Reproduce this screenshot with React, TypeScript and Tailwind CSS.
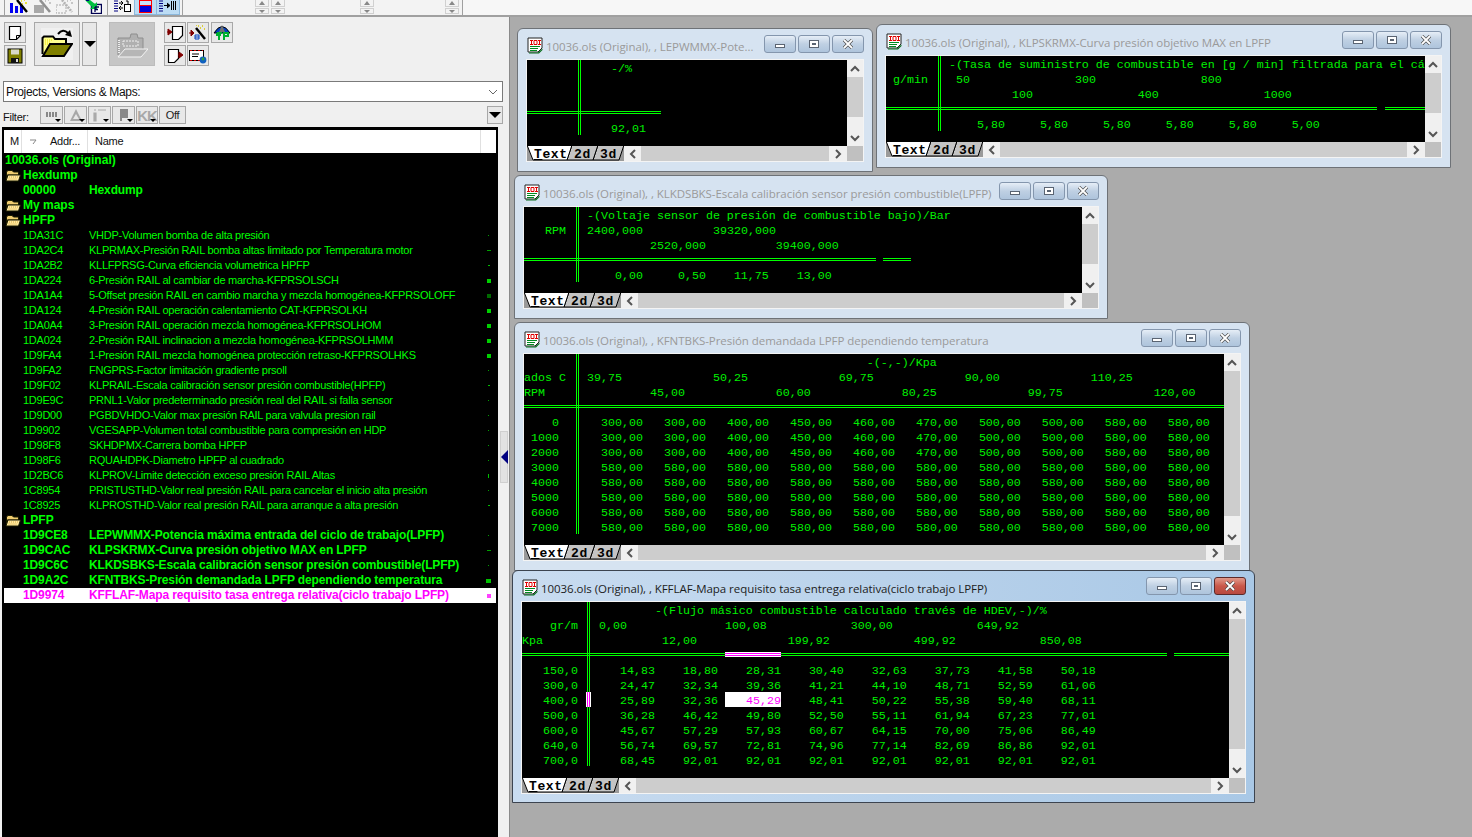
import React from "react";

type Seg = [number, string];
const pad = (n: number) => " ".repeat(Math.max(0, n));

function Line({ segs }: { segs: Seg[] }) {
  let cur = 0;
  const out: React.ReactNode[] = [];
  segs.forEach(([col, text], i) => {
    out.push(<span key={"p" + i}>{pad(col - cur)}</span>);
    out.push(<span key={i}>{text}</span>);
    cur = col + text.length;
  });
  return <div className="h-[15px] leading-[15px] whitespace-pre">{out.length ? out : " "}</div>;
}

function Chevron({ dir }: { dir: "up" | "down" | "left" | "right" }) {
  const p = {
    up: "M2 8 L6 4 L10 8",
    down: "M2 4 L6 8 L10 4",
    left: "M8 2 L4 6 L8 10",
    right: "M4 2 L8 6 L4 10",
  }[dir];
  return (
    <svg width="12" height="12" viewBox="0 0 12 12" fill="none">
      <path d={p} stroke="#555" strokeWidth="2" />
    </svg>
  );
}

function Tabs() {
  return (
    <div className="relative w-[97px] h-[15px] shrink-0 bg-[#9a9a9a] overflow-hidden font-['Liberation_Mono',monospace] text-[13px] font-bold tracking-[0.6px] leading-[18px] text-black">
      <svg width="97" height="15" viewBox="0 0 97 15" className="absolute inset-0">
        <path d="M71 -1 H97 L92 14 H66 Z" fill="#c4c4c4" stroke="#000" />
        <path d="M45 -1 H71 L66 14 H40 Z" fill="#c4c4c4" stroke="#000" />
        <path d="M0 -1 H45 L40 14 H6 Z" fill="#fff" stroke="#000" />
      </svg>
      <span className="absolute left-[7px] top-0">
        <span className="underline">T</span>ext
      </span>
      <span className="absolute left-[47px] top-0">2d</span>
      <span className="absolute left-[73px] top-0">3d</span>
    </div>
  );
}

function DocIcon() {
  return (
    <svg width="14" height="16" viewBox="0 0 14 16">
      <path d="M1.5 1.5 H12.5 V10.5 L8.5 14.5 H1.5 Z" fill="#ffffff" stroke="#000" strokeWidth="1.2" />
      <path d="M12.5 10.5 L8.5 10.5 V14.5" fill="none" stroke="#000" />
    </svg>
  );
}

function TitleIcon() {
  return (
    <svg width="16" height="17" viewBox="0 0 16 17" className="shrink-0">
      <path d="M1 1 H15 V11 L11 15 H1 Z" fill="#fff" stroke="#222" />
      <path d="M3 3.5 H6 M4.5 3.5 V7.5 M3 7.5 H6 M7 3.5 H10 V7.5 H7 Z M11 3.5 H14 M12.5 3.5 V7.5 M11 7.5 H14" stroke="#e00000" fill="none" />
      <path d="M3 9.5 H13 M3 11.5 H11 M3 13.5 H10" stroke="#008a20" />
      <path d="M2 15.5 H11 L15.5 11.5 V13 L12 16.5 H2Z" fill="#0a6e1e" />
    </svg>
  );
}

function WinBtn({ kind, active }: { kind: "min" | "max" | "close"; active?: boolean }) {
  const red = active && kind === "close";
  return (
    <div
      className={
        red
          ? "w-[32px] h-[18px] rounded-[3px] border border-[#5c2a2a] bg-gradient-to-b from-[#e09a8c] via-[#c9584a] to-[#b8493f] flex items-center justify-center"
          : "w-[32px] h-[18px] rounded-[3px] border border-[#8496ad] bg-gradient-to-b from-[#e6eef7] via-[#bfd0e3] to-[#aec4dc] flex items-center justify-center"
      }
    >
      {kind === "min" && <div className="w-[10px] h-[4px] mt-[4px] bg-white border border-[#5a6472]" />}
      {kind === "max" && (
        <div className="w-[10px] h-[8px] bg-white border border-[#5a6472] flex items-center justify-center">
          <div className="w-[4px] h-[2px] bg-[#5a6472]" />
        </div>
      )}
      {kind === "close" && (
        <svg width="12" height="10" viewBox="0 0 12 10">
          <path d="M2 1 L10 9 M10 1 L2 9" stroke="#4a4a4a" strokeWidth="3.2" />
          <path d="M2 1 L10 9 M10 1 L2 9" stroke="#fff" strokeWidth="1.8" />
        </svg>
      )}
    </div>
  );
}

function Win({
  className,
  title,
  active,
  lines,
  children,
}: {
  className: string;
  title: string;
  active?: boolean;
  lines: Seg[][];
  children?: React.ReactNode;
}) {
  return (
    <div
      className={
        "absolute rounded-t-[6px] border flex flex-col pl-[8px] pr-[8px] " +
        (active
          ? "border-[#3c4450] bg-gradient-to-r from-[#c9dcf0] to-[#a9c8e6] "
          : "border-[#6e7277] bg-[#d6e3f1] ") +
        className
      }
    >
      <div className="h-[30px] shrink-0 flex items-center pl-[1px] pt-[2px]">
        <TitleIcon />
        <div
          className={
            "ml-[3px] mt-[3px] flex-1 min-w-0 truncate text-[11.5px] font-['Open_Sans',sans-serif] tracking-[-0.05px] " +
            (active ? "text-[#1c1c1c]" : "text-[#9a9a9a]")
          }
        >
          {title}
        </div>
        <div className="flex gap-[2px] shrink-0 mb-[2px]">
          <WinBtn kind="min" />
          <WinBtn kind="max" />
          <WinBtn kind="close" active={active} />
        </div>
      </div>
      <div className="flex-1 min-h-0 flex flex-col border border-[#f4f4f4] bg-[#f0f0f0]">
        <div className="flex-1 min-h-0 flex">
          <div className="relative flex-1 min-w-0 bg-black overflow-hidden pt-[2px] text-[11.67px] tracking-normal text-[#00f000] font-['Liberation_Mono',monospace]">
            {lines.map((l, i) => (
              <Line key={i} segs={l} />
            ))}
            {children}
          </div>
          <div className="w-[16px] shrink-0 flex flex-col bg-[#f0f0f0]">
            <div className="h-[17px] flex items-center justify-center"><Chevron dir="up" /></div>
            <div className="flex-1 min-h-0 flex flex-col">
              <div className="flex-[3] bg-[#cdcdcd]" />
              <div className="h-[12px]" />
            </div>
            <div className="h-[17px] flex items-center justify-center"><Chevron dir="down" /></div>
          </div>
        </div>
        <div className="h-[15px] shrink-0 flex">
          <Tabs />
          <div className="flex-1 min-w-0 flex bg-[#f0f0f0]">
            <div className="w-[17px] flex items-center justify-center"><Chevron dir="left" /></div>
            <div className="flex-1 bg-[#cdcdcd]" />
            <div className="w-[18px] flex items-center justify-center"><Chevron dir="right" /></div>
          </div>
          <div className="w-[16px] bg-[#c0c0c0]" />
        </div>
      </div>
    </div>
  );
}

function DoubleH({ className }: { className: string }) {
  return <div className={"absolute h-[3px] border-y border-[#00ff00] " + className} />;
}
function DoubleV({ className }: { className: string }) {
  return <div className={"absolute w-[3px] border-x border-[#00ff00] " + className} />;
}

const w4low = ["300,00", "300,00", "400,00", "450,00", "460,00", "470,00", "500,00", "500,00", "580,00", "580,00"];
const w4hi = Array(10).fill("580,00") as string[];
const w4rows: [string, string[]][] = [
  ["   0", w4low],
  ["1000", w4low],
  ["2000", w4low],
  ["3000", w4hi],
  ["4000", w4hi],
  ["5000", w4hi],
  ["6000", w4hi],
  ["7000", w4hi],
];
const w4lines: Seg[][] = [
  [[49, "-(-,-)/Kpa"]],
  [[0, "ados C"], [9, "39,75"], [27, "50,25"], [45, "69,75"], [63, "90,00"], [81, "110,25"]],
  [[0, "RPM"], [18, "45,00"], [36, "60,00"], [54, "80,25"], [72, "99,75"], [90, "120,00"]],
  [],
  ...w4rows.map(([k, vals]) => [[1, k] as Seg, ...vals.map((v, i) => [11 + i * 9, v] as Seg)]),
];

const w5rows: [string, string[]][] = [
  ["150,0", ["14,83", "18,80", "28,31", "30,40", "32,63", "37,73", "41,58", "50,18"]],
  ["300,0", ["24,47", "32,34", "39,36", "41,21", "44,10", "48,71", "52,59", "61,06"]],
  ["400,0", ["25,89", "32,36", "", "48,41", "50,22", "55,38", "59,40", "68,11"]],
  ["500,0", ["36,28", "46,42", "49,80", "52,50", "55,11", "61,94", "67,23", "77,01"]],
  ["600,0", ["45,67", "57,29", "57,93", "60,67", "64,15", "70,00", "75,06", "86,49"]],
  ["640,0", ["56,74", "69,57", "72,81", "74,96", "77,14", "82,69", "86,86", "92,01"]],
  ["700,0", ["68,45", "92,01", "92,01", "92,01", "92,01", "92,01", "92,01", "92,01"]],
];
const w5lines: Seg[][] = [
  [[19, "-(Flujo másico combustible calculado través de HDEV,-)/%"]],
  [[4, "gr/m"], [11, "0,00"], [29, "100,08"], [47, "300,00"], [65, "649,92"]],
  [[0, "Kpa"], [20, "12,00"], [38, "199,92"], [56, "499,92"], [74, "850,08"]],
  [],
  ...w5rows.map(([k, vals]) => [[3, k] as Seg, ...vals.map((v, i) => [14 + i * 9, v] as Seg)]),
];

type Mark = "dot" | "dash" | "tick" | "sq" | "sqd" | "wide" | "vbar" | "mag" | "";
type Row =
  | { t: "title"; name: string }
  | { t: "folder"; name: string }
  | { t: "item"; addr: string; name: string; bold?: boolean; sel?: boolean; mark?: Mark };

const rows: Row[] = [
  { t: "title", name: "10036.ols (Original)" },
  { t: "folder", name: "Hexdump" },
  { t: "item", addr: "00000", name: "Hexdump", bold: true },
  { t: "folder", name: "My maps" },
  { t: "folder", name: "HPFP" },
  { t: "item", addr: "1DA31C", name: "VHDP-Volumen bomba de alta presión", mark: "dot" },
  { t: "item", addr: "1DA2C4", name: "KLPRMAX-Presión RAIL bomba altas limitado por Temperatura motor", mark: "dash" },
  { t: "item", addr: "1DA2B2", name: "KLLFPRSG-Curva eficiencia volumetrica HPFP", mark: "tick" },
  { t: "item", addr: "1DA224", name: "6-Presión RAIL al cambiar de marcha-KFPRSOLSCH", mark: "sq" },
  { t: "item", addr: "1DA1A4", name: "5-Offset presión RAIL en cambio marcha y mezcla homogénea-KFPRSOLOFF", mark: "sqd" },
  { t: "item", addr: "1DA124", name: "4-Presión RAIL operación calentamiento CAT-KFPRSOLKH", mark: "sq" },
  { t: "item", addr: "1DA0A4", name: "3-Presión RAIL operación mezcla homogénea-KFPRSOLHOM", mark: "sq" },
  { t: "item", addr: "1DA024", name: "2-Presión RAIL inclinacion a mezcla homogénea-KFPRSOLHMM", mark: "sq" },
  { t: "item", addr: "1D9FA4", name: "1-Presión RAIL mezcla homogénea protección retraso-KFPRSOLHKS", mark: "sq" },
  { t: "item", addr: "1D9FA2", name: "FNGPRS-Factor limitación gradiente prsoll", mark: "dot" },
  { t: "item", addr: "1D9F02", name: "KLPRAIL-Escala calibración sensor presión combustible(HPFP)", mark: "tick" },
  { t: "item", addr: "1D9E9C", name: "PRNL1-Valor predeterminado presión real del RAIL si falla sensor", mark: "dot" },
  { t: "item", addr: "1D9D00", name: "PGBDVHDO-Valor max presión RAIL para valvula presion rail", mark: "dot" },
  { t: "item", addr: "1D9902", name: "VGESAPP-Volumen total combustible para compresión en HDP", mark: "dot" },
  { t: "item", addr: "1D98F8", name: "SKHDPMX-Carrera bomba HPFP", mark: "dot" },
  { t: "item", addr: "1D98F6", name: "RQUAHDPK-Diametro HPFP al cuadrado", mark: "dot" },
  { t: "item", addr: "1D2BC6", name: "KLPROV-Limite detección exceso presión RAIL Altas", mark: "vbar" },
  { t: "item", addr: "1C8954", name: "PRISTUSTHD-Valor real presión RAIL para cancelar el inicio alta presión", mark: "dot" },
  { t: "item", addr: "1C8925", name: "KLPROSTHD-Valor real presión RAIL para arranque a alta presión", mark: "tick" },
  { t: "folder", name: "LPFP" },
  { t: "item", addr: "1D9CE8", name: "LEPWMMX-Potencia máxima entrada del ciclo de trabajo(LPFP)", bold: true, mark: "dot" },
  { t: "item", addr: "1D9CAC", name: "KLPSKRMX-Curva presión objetivo MAX en LPFP", bold: true, mark: "dash" },
  { t: "item", addr: "1D9C6C", name: "KLKDSBKS-Escala calibración sensor presión combustible(LPFP)", bold: true, mark: "dot" },
  { t: "item", addr: "1D9A2C", name: "KFNTBKS-Presión demandada LPFP dependiendo temperatura", bold: true, mark: "wide" },
  { t: "item", addr: "1D9974", name: "KFFLAF-Mapa requisito tasa entrega relativa(ciclo trabajo LPFP)", bold: true, sel: true, mark: "mag" },
];

function MarkDot({ m }: { m?: Mark }) {
  const cls: Record<string, string> = {
    dot: "w-[1px] h-[1px] bg-[#00a000]",
    tick: "w-[2px] h-[1px] bg-[#00c000]",
    dash: "w-[4px] h-[1px] bg-[#00a000]",
    sq: "w-[4px] h-[4px] bg-[#00d000]",
    sqd: "w-[4px] h-[4px] bg-[#006a00]",
    wide: "w-[5px] h-[4px] bg-[#00c000]",
    vbar: "w-[1px] h-[4px] bg-[#00c000]",
    mag: "w-[4px] h-[4px] bg-[#ff40ff]",
  };
  if (!m) return null;
  return (
    <div className="absolute right-[5px] top-0 h-[15px] w-[5px] flex items-center justify-center">
      <div className={cls[m]} />
    </div>
  );
}

function Folder() {
  return (
    <svg width="16" height="13" viewBox="0 0 16 13" className="shrink-0">
      <path d="M1.5 11 V3 L3 1.5 H7 L8.5 3 H13.5 V6 H2" fill="#f0cc70" stroke="#1a1a00" />
      <path d="M1 12 L3 6 H15.5 L13.5 12 Z" fill="#ffe9a0" stroke="#1a1a00" />
      <path d="M4 8 H13 M3.5 10 H12" stroke="#d8a840" strokeDasharray="1 1" />
    </svg>
  );
}

function TreeRow({ r }: { r: Row }) {
  if (r.t === "title")
    return <div className="h-[15px] pl-[1px] font-bold text-[12px] tracking-normal text-[#00ff00] relative">{r.name}</div>;
  if (r.t === "folder")
    return (
      <div className="h-[15px] flex items-center pl-[1px] font-bold text-[12px] tracking-normal text-[#00ff00]">
        <Folder />
        <span className="ml-[2px]">{r.name}</span>
      </div>
    );
  return (
    <div
      className={
        "h-[15px] flex relative pl-[19px] " +
        (r.sel ? "bg-white text-[#ff00ff] " : "text-[#00ff00] ") +
        (r.bold ? "font-bold text-[12px] tracking-[-0.12px]" : "")
      }
    >
      <span className="w-[66px] shrink-0">{r.addr}</span>
      <span className="whitespace-nowrap">{r.name}</span>
      <MarkDot m={r.mark} />
    </div>
  );
}

function Btn({ className, children }: { className: string; children?: React.ReactNode }) {
  return (
    <div className={"border-[1.5px] border-[#a8a8a8] bg-[#e8e8e8] flex items-center justify-center " + className}>
      {children}
    </div>
  );
}

function Spin({ className }: { className: string }) {
  return (
    <div className={"w-[14px] h-[16px] flex flex-col gap-[1px] overflow-hidden " + className}>
      <div className="h-[7px] border border-[#d0d0d0] border-t-0 flex items-center justify-center">
        <div className="w-0 h-0 border-x-[3px] border-x-transparent border-b-[4px] border-b-[#888]" />
      </div>
      <div className="h-[6px] border border-[#d0d0d0] flex items-center justify-center">
        <div className="w-0 h-0 border-x-[3px] border-x-transparent border-t-[3px] border-t-[#888]" />
      </div>
    </div>
  );
}

function WandChart() {
  return (
    <svg width="18" height="14" viewBox="0 0 18 14">
      <rect x="0" y="3" width="3" height="10" fill="#0000f0" />
      <rect x="5" y="6" width="3" height="7" fill="#0000f0" />
      <rect x="10" y="4" width="3" height="9" fill="#0000f0" />
      <path d="M7 0 L17 12" stroke="#000" strokeWidth="2.4" />
      <path d="M11 1 h1 M14 0 h1 M15 3 h2 M12 4 h1" stroke="#e8d800" strokeWidth="1.4" />
    </svg>
  );
}
function WandGray({ outline }: { outline?: boolean }) {
  return (
    <svg width="17" height="14" viewBox="0 0 17 14">
      <rect x="0" y="5" width="10" height="8" fill={outline ? "none" : "#a8a8a8"} stroke={outline ? "#a8a8a8" : "none"} strokeDasharray={outline ? "2 1" : undefined} />
      <path d="M6 0 L16 12" stroke={outline ? "#b4b4b4" : "#909090"} strokeWidth="2.6" strokeDasharray={outline ? "2 1" : undefined} />
      <path d="M11 1 h1 M14 0 h1 M15 3 h2" stroke="#b8b8b8" strokeWidth="1.4" />
    </svg>
  );
}

function TopBar() {
  return (
    <div className="h-[17px] shrink-0 flex bg-[#f3f3f3] border-b-2 border-[#a0a0a0] overflow-hidden">
      <div className="w-[463px] flex items-start border-r border-[#a0a0a0] relative">
        <div className="w-[1px] h-[15px] bg-[#a0a0a0] ml-[4px]" />
        <div className="ml-[5px]"><WandChart /></div>
        <div className="ml-[6px]"><WandGray /></div>
        <div className="ml-[5px]"><WandGray outline /></div>
        <div className="w-[1px] h-[15px] bg-[#a0a0a0] ml-[5px]" />
        <svg width="17" height="14" viewBox="0 0 17 14" className="ml-[6px]">
          <rect x="6.5" y="4.5" width="10" height="9" fill="#fff" stroke="#000050" strokeWidth="1.4" />
          <path d="M0 0 H5 L10 4 L12 2 V9 H5 L7 7 Z" fill="#00c040" />
          <path d="M1 0 H4" stroke="#000080" strokeWidth="2" />
          <path d="M10 7 H14 M10 7 V12 M10 9.5 H13" stroke="#000050" strokeWidth="1.3" fill="none" />
        </svg>
        <div className="w-[1px] h-[15px] bg-[#a0a0a0] ml-[5px]" />
        <svg width="17" height="14" viewBox="0 0 17 14" className="ml-[6px]">
          <path d="M0 1 H4 M0 3.5 H4 M0 6 H4 M0 8.5 H4 M0 11 H4" stroke="#000080" />
          <path d="M5 3 H9 M7 1 L9 3 L7 5" stroke="#000" fill="none" />
          <path d="M9 8 H5 M7 6 L5 8 L7 10" stroke="#000" fill="none" />
          <rect x="10.5" y="4.5" width="6" height="7" fill="#fff" stroke="#000" />
          <path d="M12 1 H14 V4" stroke="#000" fill="none" />
        </svg>
        <div className="ml-[3px] w-[23px] h-[15px] bg-[#bcdcf4] border-x border-b border-[#8cb8dc] flex items-start justify-center">
          <div className="w-[13px] h-[13px] border border-[#ff0000] flex flex-col">
            <div className="h-[5px] border-b border-[#ff0000] bg-[#c8e0f8]" />
            <div className="flex-1 bg-[#0000d8]" />
          </div>
        </div>
        <div className="w-[23px] h-[15px] bg-[#bcdcf4] border-r border-b border-[#8cb8dc] flex items-start justify-center">
          <svg width="18" height="13" viewBox="0 0 18 13">
            <path d="M0 1 H4 M0 3.5 H4 M0 6 H4 M0 8.5 H4 M0 11 H4" stroke="#000080" />
            <path d="M5 5.5 H10 M8 3 L11 5.5 L8 8" stroke="#000" fill="#000" />
            <path d="M12.5 1 V10 M14.5 1 V10 M16.5 1 V10" stroke="#000" />
          </svg>
        </div>
        <div className="w-[1px] h-[15px] bg-[#a0a0a0] ml-[2px]" />
        <Spin className="ml-[72px]" />
        <Spin className="ml-[2px]" />
        <Spin className="ml-[75px]" />
        <Spin className="ml-[71px]" />
      </div>
      <div className="flex-1 bg-[#f7f7f7]" />
    </div>
  );
}

function ToolsArea() {
  return (
    <div className="h-[64px] shrink-0 flex pl-[4px] pt-[5px]">
      <div className="flex flex-col gap-[2px]">
        <Btn className="w-[22px] h-[21px]"><DocIcon /></Btn>
        <Btn className="w-[22px] h-[21px]">
          <svg width="16" height="16" viewBox="0 0 16 16">
            <rect x="1" y="1" width="14" height="14" fill="#808000" stroke="#000" />
            <rect x="4" y="1.5" width="8" height="5" fill="#d8d8c8" />
            <rect x="4" y="10" width="8" height="5" fill="#111" />
            <rect x="9" y="11" width="2" height="3" fill="#ddd" />
          </svg>
        </Btn>
      </div>
      <Btn className="w-[46px] h-[44px] ml-[8px]">
        <div className="w-[32px] h-[32px] bg-[#f0f0f0] flex items-center justify-center">
          <svg width="32" height="32" viewBox="0 0 32 32">
            <path d="M1.5 26 V10 L3 8.5 H12 L14 11 H25 V16" fill="#ffff90" stroke="#000" strokeWidth="2" />
            <path d="M4 12 H12 M4 14 H10 M4 16 H8" stroke="#e8e000" strokeDasharray="1 1" />
            <path d="M2 28 L9 16 H31 L23 28 Z" fill="#808000" stroke="#000" strokeWidth="2" />
            <path d="M17 6 Q22 0 27 5" fill="none" stroke="#000" strokeWidth="2" />
            <path d="M24 7 L31 9 L29 2 Z" fill="#000" />
          </svg>
        </div>
      </Btn>
      <Btn className="w-[15px] h-[44px] ml-[2px]">
        <div className="w-0 h-0 border-x-[6px] border-x-transparent border-t-[6px] border-t-black" />
      </Btn>
      <div className="w-[46px] h-[44px] ml-[12px] bg-[#c6c6c6] border-[1.5px] border-[#bcbcbc] flex items-center justify-center">
        <svg width="32" height="30" viewBox="0 0 32 30">
          <path d="M2 26 V9 H14 L15 5 H21 L22 9 H27 V20" fill="#b0b0b0" stroke="#8e8e8e" />
          <path d="M2 28 L9 20 H32 L25 28 Z" fill="#b6b6b6" stroke="#f4f4f4" />
          <rect x="7" y="12" width="15" height="5" fill="none" stroke="#f0f0f0" strokeDasharray="2 1" />
          <path d="M3 11 V24" stroke="#eee" strokeDasharray="1 1" strokeWidth="2" />
        </svg>
      </div>
      <div className="ml-[9px] flex flex-col gap-[2px]">
        <div className="flex gap-px">
          <Btn className="w-[22px] h-[21px]">
            <svg width="17" height="16" viewBox="0 0 17 16">
              <path d="M5.5 1.5 H15.5 V10.5 L11.5 14.5 H5.5 Z" fill="#fff" stroke="#000" strokeWidth="1.2" />
              <path d="M0 7 H2 M1 4 L5 7 L1 10 Z" stroke="#800000" fill="#800000" />
            </svg>
          </Btn>
          <Btn className="w-[22px] h-[21px]">
            <svg width="18" height="16" viewBox="0 0 18 16">
              <path d="M0 8 H2 M2 5 L5 8 L2 11 Z" stroke="#800000" fill="#800000" />
              <path d="M7 3 L16 14" stroke="#000" strokeWidth="2.4" />
              <path d="M9 1 h1 M13 1 h1 M7 0 h1 M15 4 h1 M11 3 h1" stroke="#d8c800" strokeWidth="1.3" />
              <path d="M6 10 H10 V14 H6 Z M6 12 H10" fill="none" stroke="#0040c0" />
            </svg>
          </Btn>
          <Btn className="w-[22px] h-[21px] ml-px">
            <svg width="18" height="17" viewBox="0 0 18 17">
              <path d="M1 9 Q9 -4 17 9 Z" fill="#0040c0" stroke="#000" />
              <path d="M6 8 L9 1 L12 8 Z" fill="#707070" />
              <path d="M4 9 H9 M4 9 V12 M4 11 H8 M10 9 H15 V12 H11 M11 9 V16 M6 9 V16" stroke="#00b030" strokeWidth="2" fill="none" />
            </svg>
          </Btn>
        </div>
        <div className="flex gap-px">
          <Btn className="w-[22px] h-[21px]">
            <svg width="17" height="16" viewBox="0 0 17 16">
              <path d="M1.5 1.5 H11.5 V10.5 L7.5 14.5 H1.5 Z" fill="#fff" stroke="#000" strokeWidth="1.2" />
              <path d="M11 7 H13 M12 4 L16 7 L12 10 Z" stroke="#800000" fill="#800000" />
            </svg>
          </Btn>
          <Btn className="w-[22px] h-[21px]">
            <svg width="18" height="16" viewBox="0 0 18 16">
              <rect x="0.5" y="2.5" width="14" height="10" fill="#fff" stroke="#000" />
              <path d="M1 2.5 H14 M1 12.5 H14" stroke="#d00000" strokeDasharray="2 2" />
              <path d="M3 6 H10 M3 8.5 H9" stroke="#000" />
              <circle cx="14" cy="12" r="3.4" fill="#1060c0" />
              <circle cx="14" cy="11" r="1.4" fill="#30a040" />
            </svg>
          </Btn>
        </div>
      </div>
    </div>
  );
}

function SmallDrop() {
  return (
    <div className="absolute right-[1px] bottom-[1px] w-0 h-0 border-x-[3px] border-x-transparent border-t-[3px] border-t-black" />
  );
}

function FilterBar() {
  return (
    <div className="h-[21px] shrink-0 flex items-start pl-[3px] mt-[4px]">
      <span className="text-[#111] mt-[3px] w-[37px]">Filter:</span>
      <div className="flex gap-[1px]">
        <Btn className="w-[23px] h-[18px] relative">
          <div className="flex gap-px mb-[2px] mr-[1px]">
            <div className="w-[2px] h-[5px] bg-[#888]" /><div className="w-[2px] h-[5px] bg-[#888]" /><div className="w-[2px] h-[5px] bg-[#888]" /><div className="w-[2px] h-[5px] bg-[#888]" />
          </div>
          <SmallDrop />
        </Btn>
        <Btn className="w-[23px] h-[18px] relative">
          <svg width="14" height="14" viewBox="0 0 14 14"><path d="M7 1 L13 13 H1 Z" fill="#a8a8a8" /><path d="M7 6 L10 11 H4 Z" fill="#e8e8e8" /></svg>
          <SmallDrop />
        </Btn>
        <Btn className="w-[23px] h-[18px] relative">
          <svg width="14" height="14" viewBox="0 0 14 14"><path d="M5 2 H13 M1 2 H3 M1 5 H3 V13 H1Z" stroke="#aaa" strokeWidth="1.2" fill="#aaa" /></svg>
          <SmallDrop />
        </Btn>
        <Btn className="w-[23px] h-[18px] relative">
          <svg width="12" height="14" viewBox="0 0 12 14"><path d="M3 1 V13 M3 2 H9 V9 H3" stroke="#888" strokeWidth="2" fill="#888" /></svg>
          <SmallDrop />
        </Btn>
        <Btn className="w-[22px] h-[18px] relative">
          <span className="font-bold text-[15px] leading-none text-[#a8a8a8] tracking-[-1px]">KK</span>
          <SmallDrop />
        </Btn>
        <Btn className="w-[27px] h-[18px]"><span className="text-[#222]">Off</span></Btn>
      </div>
      <Btn className="w-[16px] h-[18px] ml-auto mr-[6px]">
        <div className="w-0 h-0 border-x-[6px] border-x-transparent border-t-[6px] border-t-black" />
      </Btn>
    </div>
  );
}

function ListPanel() {
  return (
    <div className="flex-1 min-h-0 flex">
      <div className="w-[496px] ml-[2px] shrink-0 border-2 border-black border-t-[3px] flex flex-col bg-black">
        <div className="h-[23px] shrink-0 bg-white flex items-center text-[#111] relative">
          <div className="w-[18px] border-r border-[#e0e0e0] h-full flex items-center overflow-hidden pl-[6px]"><span>M</span></div>
          <div className="w-[66px] border-r border-[#e0e0e0] h-full flex items-center">
            <svg width="8" height="6" viewBox="0 0 8 6" className="ml-[7px]"><path d="M1 1 H7 L4 5" fill="none" stroke="#888" /></svg>
            <span className="ml-[13px]">Addr...</span>
          </div>
          <div className="flex-1 pl-[7px] border-r border-[#e0e0e0] h-full flex items-center">Name</div>
          <div className="w-[15px]" />
        </div>
        <div className="flex-1 min-h-0 leading-[15px] overflow-hidden">
          {rows.map((r, i) => (
            <TreeRow key={i} r={r} />
          ))}
        </div>
      </div>
      <div className="flex-1 pt-[304px] pl-[2px]">
        <div className="w-[8px] h-[52px] bg-[#e2e2e2] border border-[#cfcfcf] flex items-center justify-start">
          <div className="w-0 h-0 border-y-[7px] border-y-transparent border-r-[7px] border-r-[#000080]" />
        </div>
      </div>
    </div>
  );
}

export default function App() {
  return (
    <div className="w-[1472px] h-[837px] overflow-hidden flex flex-col bg-[#f0f0f0] text-[11px] font-['Liberation_Sans',sans-serif] tracking-[-0.25px]">
      <TopBar />
      <div className="flex-1 min-h-0 flex">
        <div className="w-[510px] shrink-0 flex flex-col bg-[#f0f0f0] border-r border-[#8a8a8a]">
          <ToolsArea />
          <div className="h-[21px] shrink-0 mx-[3px] w-[500px] bg-white border border-[#7a7a7a] flex items-center pl-[2px] pr-[4px]">
            <span className="flex-1 text-[12px] tracking-[-0.35px] text-[#111]">Projects, Versions &amp; Maps:</span>
            <svg width="10" height="6" viewBox="0 0 10 6"><path d="M1 1 L5 5 L9 1" fill="none" stroke="#666" /></svg>
          </div>
          <FilterBar />
          <ListPanel />
        </div>
        <div className="relative flex-1 min-w-0 bg-[#ababab]">
          <Win
            className="left-[7px] top-[11px] w-[356px] h-[144px] pb-[9px]"
            title="10036.ols (Original), , LEPWMMX-Pote..."
            lines={[[[12, "-/%"]], [], [], [], [[12, "92,01"]]]}
          >
            <DoubleV className="left-[51px] top-0 h-[75px]" />
            <DoubleH className="left-0 top-[51px] w-[134px]" />
          </Win>
          <Win
            className="left-[366px] top-[7px] w-[575px] h-[144px] pb-[9px]"
            title="10036.ols (Original), , KLPSKRMX-Curva presión objetivo MAX en LPFP"
            lines={[
              [[9, "-(Tasa de suministro de combustible en [g / min] filtrada para el cá"]],
              [[1, "g/min"], [10, "50"], [27, "300"], [45, "800"]],
              [[18, "100"], [36, "400"], [54, "1000"]],
              [],
              [[13, "5,80"], [22, "5,80"], [31, "5,80"], [40, "5,80"], [49, "5,80"], [58, "5,00"]],
            ]}
          >
            <DoubleV className="left-[52px] top-0 h-[75px]" />
            <DoubleH className="left-0 top-[51px] w-[491px]" />
            <DoubleH className="left-[499px] top-[51px] w-[40px]" />
          </Win>
          <Win
            className="left-[4px] top-[158px] w-[594px] h-[144px] pb-[9px]"
            title="10036.ols (Original), , KLKDSBKS-Escala calibración sensor presión combustible(LPFP)"
            lines={[
              [[9, "-(Voltaje sensor de presión de combustible bajo)/Bar"]],
              [[3, "RPM"], [9, "2400,000"], [27, "39320,000"]],
              [[18, "2520,000"], [36, "39400,000"]],
              [],
              [[13, "0,00"], [22, "0,50"], [30, "11,75"], [39, "13,00"]],
            ]}
          >
            <DoubleV className="left-[52px] top-0 h-[75px]" />
            <DoubleH className="left-0 top-[51px] w-[352px]" />
            <DoubleH className="left-[359px] top-[51px] w-[28px]" />
          </Win>
          <Win
            className="left-[4px] top-[305px] w-[736px] h-[249px] pb-[9px]"
            title="10036.ols (Original), , KFNTBKS-Presión demandada LPFP dependiendo temperatura"
            lines={w4lines}
          >
            <DoubleV className="left-[52px] top-0 h-[180px]" />
            <DoubleH className="left-0 top-[51px] w-full" />
          </Win>
          <Win
            className="left-[2px] top-[553px] w-[743px] h-[233px] pb-[8px]"
            title="10036.ols (Original), , KFFLAF-Mapa requisito tasa entrega relativa(ciclo trabajo LPFP)"
            lines={w5lines}
            active
          >
            <DoubleV className="left-[65px] top-0 h-[164px]" />
            <DoubleH className="left-0 top-[51px] w-[645px]" />
            <DoubleH className="left-[652px] top-[51px] w-[55px]" />
            <div className="absolute left-[203px] top-[50px] w-[56px] h-[5px] bg-[repeating-linear-gradient(180deg,#fff_0,#fff_1px,#ff00ff_1px,#ff00ff_2px)]" />
            <div className="absolute left-[64px] top-[90px] w-[5px] h-[15px] bg-[repeating-linear-gradient(90deg,#fff_0,#fff_1px,#ff00ff_1px,#ff00ff_2px)]" />
            <div className="absolute left-[203px] top-[90px] w-[56px] h-[15px] bg-white text-[#ff00ff] pt-[2px] pl-[21px] leading-[15px] whitespace-pre overflow-hidden">45,29</div>
          </Win>
        </div>
      </div>
    </div>
  );
}
